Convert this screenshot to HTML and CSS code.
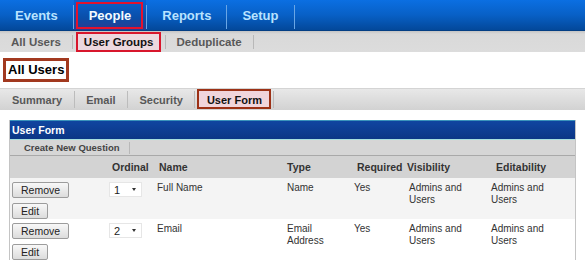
FILE: index.html
```html
<!DOCTYPE html>
<html>
<head>
<meta charset="utf-8">
<title>User Form</title>
<link rel="stylesheet" href="styles.css">
</head>
<body>
<nav class="topnav">
  <span class="nav-item">Events</span><span class="nav-sep"></span>
  <span class="nav-item active">People</span><span class="nav-sep"></span>
  <span class="nav-item">Reports</span><span class="nav-sep"></span>
  <span class="nav-item">Setup</span><span class="nav-sep"></span>
</nav>
<nav class="subnav">
  <span class="sub-item">All Users</span><span class="sub-sep"></span>
  <span class="sub-item active">User Groups</span><span class="sub-sep"></span>
  <span class="sub-item">Deduplicate</span><span class="sub-sep"></span>
</nav>
<div class="page-head"><h1 class="page-title">All Users</h1></div>
<nav class="tabs">
  <span class="tab first">Summary</span><span class="tab-sep"></span>
  <span class="tab">Email</span><span class="tab-sep"></span>
  <span class="tab">Security</span><span class="tab-sep"></span>
  <span class="tab active">User Form</span><span class="tab-sep"></span>
</nav>
<section class="panel">
  <div class="panel-header">User Form</div>
  <div class="panel-toolbar"><span class="tool">Create New Question</span><span class="tool-sep"></span></div>
  <div class="grid head">
    <div class="h1"></div>
    <div class="h2">Ordinal</div>
    <div class="h3">Name</div>
    <div class="h4">Type</div>
    <div class="h5">Required</div>
    <div class="h6">Visibility</div>
    <div class="h7">Editability</div>
  </div>
  <div class="grid row odd">
    <div class="c1 actions"><button class="btn">Remove</button><button class="btn">Edit</button></div>
    <div class="c2"><span class="select"><span>1</span><span class="caret"></span></span></div>
    <div class="c3">Full Name</div>
    <div class="c4">Name</div>
    <div class="c5">Yes</div>
    <div class="c6">Admins and<br>Users</div>
    <div class="c7">Admins and<br>Users</div>
  </div>
  <div class="grid row even">
    <div class="c1 actions"><button class="btn">Remove</button><button class="btn">Edit</button></div>
    <div class="c2"><span class="select"><span>2</span><span class="caret"></span></span></div>
    <div class="c3">Email</div>
    <div class="c4">Email<br>Address</div>
    <div class="c5">Yes</div>
    <div class="c6">Admins and<br>Users</div>
    <div class="c7">Admins and<br>Users</div>
  </div>
</section>
</body>
</html>
```
FILE: styles.css
```css
* { box-sizing: border-box; }
body {
  margin: 0;
  font-family: "Liberation Sans", Arial, sans-serif;
  background: #fff;
  color: #333;
}

/* top navigation */
.topnav {
  display: flex;
  height: 31px;
  background: linear-gradient(#0b6fe2, #0860c6 50%, #03489a);
  border-bottom: 1px solid #033e84;
}
.nav-item {
  display: flex;
  align-items: center;
  padding: 1px 15px 0;
  font-size: 13px;
  font-weight: bold;
  color: #b9e3ff;
}
.nav-item.active {
  position: relative;
  color: #f4fbff;
  background: linear-gradient(#0a62d0, #0a4ea8 60%, #2a3a90);
}
.nav-item.active::after {
  content: "";
  position: absolute;
  left: 2px;
  right: 3px;
  top: 2px;
  bottom: 1px;
  border: 2px solid #e3122d;
}
.nav-sep {
  width: 1px;
  height: 24px;
  margin-top: 5px;
  background: #69a6e6;
}

/* sub navigation */
.subnav {
  display: flex;
  height: 21px;
  background: linear-gradient(#c4c4c4, #d9d9d9 3px, #dcdcdc);
}
.sub-item {
  display: flex;
  align-items: center;
  padding: 0 11px;
  font-size: 11.5px;
  font-weight: bold;
  color: #585858;
}
.sub-item.active {
  position: relative;
  z-index: 0;
  color: #111;
}
.sub-item.active::before {
  content: "";
  position: absolute;
  left: 3px;
  right: 4px;
  top: 1px;
  bottom: 0;
  border: 2px solid #d8162c;
  background: #ecd8de;
  z-index: -1;
}
.sub-sep {
  width: 1px;
  height: 14px;
  align-self: center;
  background: #b8b8b8;
}

/* page heading */
.page-head {
  display: flex;
  padding: 6px 0 6px 3px;
}
.page-title {
  margin: 0;
  border: 3px solid #a2391f;
  padding: 0 2px;
  font-size: 13px;
  line-height: 18px;
  font-weight: bold;
  color: #000;
}

/* tabs */
.tabs {
  display: flex;
  height: 22px;
  background: linear-gradient(#e8e8e8, #d2d2d2);
  border-top: 1px solid #d4d4d4;
}
.tab {
  display: flex;
  align-items: center;
  padding: 0 11.5px;
  font-size: 11px;
  font-weight: bold;
  color: #585858;
}
.tab.first { padding-left: 12px; }
.tab.active {
  position: relative;
  z-index: 0;
  color: #111;
}
.tab.active::before {
  content: "";
  position: absolute;
  left: 2px;
  right: 2px;
  top: 0;
  bottom: 1px;
  border: 2.5px solid #9c3116;
  background: #f0d5dc;
  z-index: -1;
}
.tab-sep {
  width: 1px;
  height: 17px;
  align-self: center;
  background: #bcbcbc;
}

/* panel */
.panel {
  margin: 10px 0 0 9px;
  width: 567px;
  border-left: 1px solid #c4c4c4;
  border-right: 1px solid #c4c4c4;
}
.panel-header {
  display: flex;
  align-items: center;
  height: 19px;
  padding-left: 2px;
  background: linear-gradient(#1045a0, #0b3686);
  border-top: 1px solid #3a93bb;
  color: #fff;
  font-size: 10.5px;
  font-weight: bold;
}
.panel-toolbar {
  display: flex;
  height: 17px;
  background: #d6d6d6;
  border-top: 1px solid #a6dede;
  border-bottom: 1px solid #a9a9a9;
}
.tool {
  display: flex;
  align-items: center;
  padding: 0 9px 0 14px;
  font-size: 9.5px;
  font-weight: bold;
  color: #444;
}
.tool-sep {
  width: 1px;
  height: 12px;
  align-self: center;
  background: #b8b8b8;
}

.grid {
  display: grid;
  grid-template-columns: 97px 48px 130px 66px 54px 84px 1fr;
}
.head {
  height: 22px;
  align-items: center;
  background: #d3d3d3;
  font-size: 10.5px;
  font-weight: bold;
  color: #333;
}
.h2 { padding-left: 5px; }
.h3 { padding-left: 4px; }
.h4 { padding-left: 2px; }
.h5 { padding-left: 6px; }
.h6 { padding-left: 2px; }
.h7 { padding-left: 7px; }

.row {
  align-items: start;
  padding-top: 4px;
  font-size: 10px;
  line-height: 12px;
  color: #333;
}
.row.odd { height: 41px; background: #f4f4f4; }
.row.even { height: 42px; background: #fff; }
.c1 { padding-left: 2px; }
.c2 { padding-left: 2px; }
.c3 { padding-left: 2px; }
.c4 { padding-left: 2px; }
.c5 { padding-left: 3px; }
.c6 { padding-left: 4px; }
.c7 { padding-left: 2px; }

.actions {
  display: flex;
  flex-direction: column;
  align-items: flex-start;
  gap: 5px;
}
.btn {
  display: block;
  height: 16px;
  margin: 0;
  padding: 0 8px;
  font-family: "Liberation Sans", Arial, sans-serif;
  font-size: 10.5px;
  line-height: 14px;
  color: #222;
  border: 1px solid #9c9c9c;
  border-radius: 2px;
  background: linear-gradient(#f8f8f8, #dcdcdc);
}
.select {
  display: flex;
  align-items: center;
  justify-content: space-between;
  width: 33px;
  height: 15px;
  padding: 0 5px 0 4px;
  background: #fff;
  border: 1px solid #e6e6e6;
  font-size: 11px;
  color: #222;
}
.caret {
  width: 0;
  height: 0;
  border-left: 2.5px solid transparent;
  border-right: 2.5px solid transparent;
  border-top: 3px solid #333;
}
```
